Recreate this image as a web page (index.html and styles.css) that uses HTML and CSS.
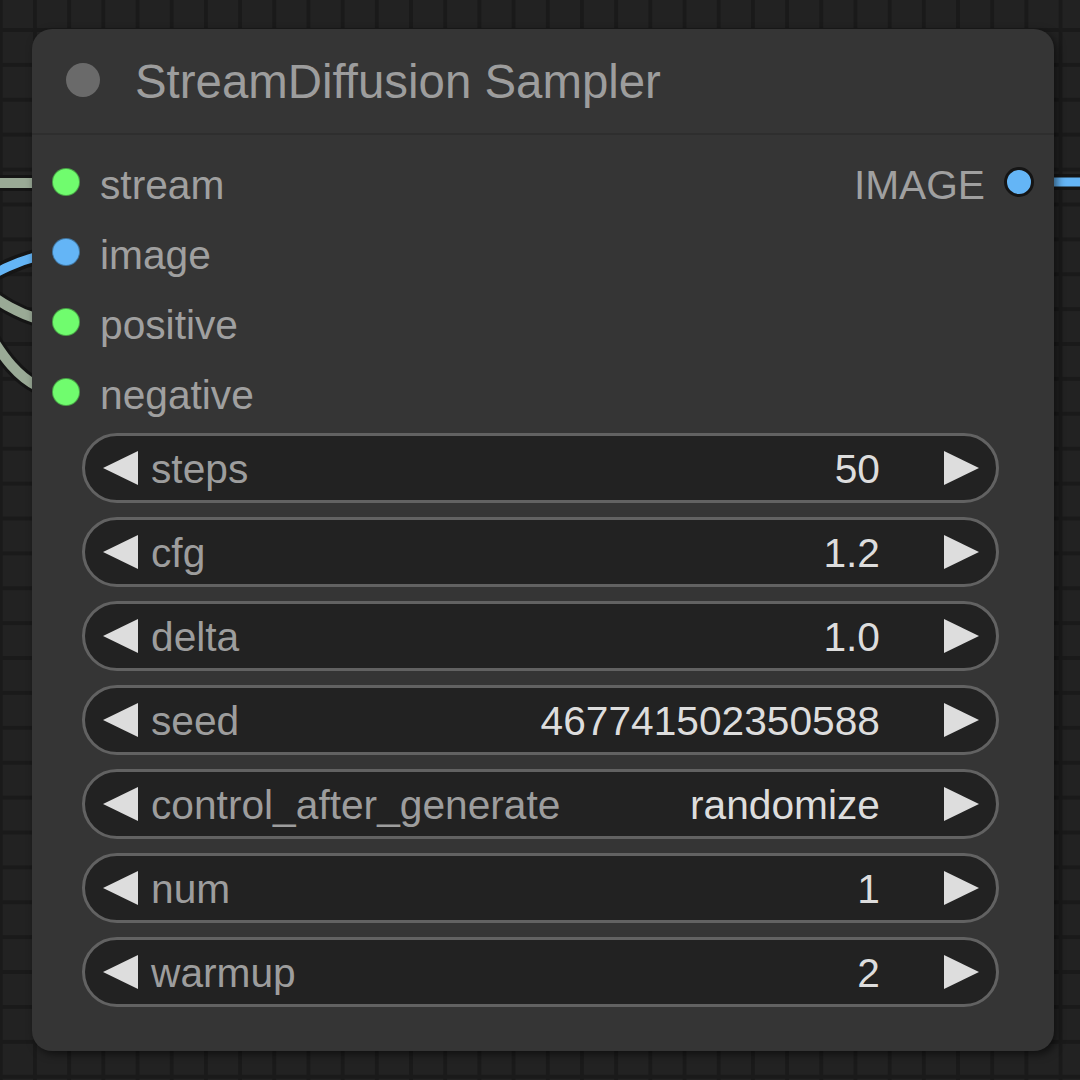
FILE: index.html
```html
<!DOCTYPE html>
<html>
<head>
<meta charset="utf-8">
<link rel="stylesheet" href="styles.css">
</head>
<body>
<div class="canvas">
  <svg class="links" width="1080" height="1080" viewBox="0 0 1080 1080">
    <g fill="none" stroke-linecap="butt">
      <path class="link-outline" d="M -20 183 L 66 183"/>
      <path class="link-cond" d="M -20 183 L 66 183"/>
      <path class="link-outline" d="M -60 250 C -20 300, 0 393, 66 393"/>
      <path class="link-cond" d="M -60 250 C -20 300, 0 393, 66 393"/>
      <path class="link-outline" d="M -100 230 C -40 260, 0 323, 66 323"/>
      <path class="link-cond" d="M -100 230 C -40 260, 0 323, 66 323"/>
      <path class="link-outline" d="M -100 330 C -40 300, 5 253, 66 253"/>
      <path class="link-image" d="M -100 330 C -40 300, 5 253, 66 253"/>
      <path class="link-outline" d="M 1019 182 L 1100 182"/>
      <path class="link-image" d="M 1019 182 L 1100 182"/>
    </g>
  </svg>

  <div class="node">
    <div class="node-title">
      <span class="title-dot"></span>
      <span class="title-text">StreamDiffusion Sampler</span>
    </div>
    <div class="node-body">
      <div class="slots">
        <div class="slot-row">
          <div class="slot-in"><span class="dot green"></span><span class="slot-label">stream</span></div>
          <div class="slot-out"><span class="slot-label">IMAGE</span><span class="dot blue out"></span></div>
        </div>
        <div class="slot-row">
          <div class="slot-in"><span class="dot blue"></span><span class="slot-label">image</span></div>
        </div>
        <div class="slot-row">
          <div class="slot-in"><span class="dot green"></span><span class="slot-label">positive</span></div>
        </div>
        <div class="slot-row">
          <div class="slot-in"><span class="dot green"></span><span class="slot-label">negative</span></div>
        </div>
      </div>
      <div class="widgets">
        <div class="widget"><span class="arrow left"></span><span class="w-label">steps</span><span class="w-value">50</span><span class="arrow right"></span></div>
        <div class="widget"><span class="arrow left"></span><span class="w-label">cfg</span><span class="w-value">1.2</span><span class="arrow right"></span></div>
        <div class="widget"><span class="arrow left"></span><span class="w-label">delta</span><span class="w-value">1.0</span><span class="arrow right"></span></div>
        <div class="widget"><span class="arrow left"></span><span class="w-label">seed</span><span class="w-value">467741502350588</span><span class="arrow right"></span></div>
        <div class="widget"><span class="arrow left"></span><span class="w-label">control_after_generate</span><span class="w-value">randomize</span><span class="arrow right"></span></div>
        <div class="widget"><span class="arrow left"></span><span class="w-label">num</span><span class="w-value">1</span><span class="arrow right"></span></div>
        <div class="widget"><span class="arrow left"></span><span class="w-label">warmup</span><span class="w-value">2</span><span class="arrow right"></span></div>
      </div>
    </div>
  </div>
</div>
</body>
</html>
```

FILE: styles.css
```css
* { box-sizing: border-box; }
html, body {
  margin: 0;
  padding: 0;
  width: 1080px;
  height: 1080px;
  overflow: hidden;
  background: #222222;
  font-family: "Liberation Sans", Arial, sans-serif;
}
.canvas {
  position: relative;
  width: 1080px;
  height: 1080px;
  background-color: #222222;
  background-image:
    linear-gradient(to right, #1a1a1a 0, #1a1a1a 4px, transparent 4px),
    linear-gradient(to bottom, #1a1a1a 0, #1a1a1a 4px, transparent 4px);
  background-size: 34.2px 34.9px, 34.2px 34.9px;
  background-position: 33px 0, 0 28px;
}
.links {
  position: absolute;
  left: 0;
  top: 0;
}
.link-outline { stroke: #151515; stroke-width: 16; }
.link-cond { stroke: #9aaa96; stroke-width: 10; }
.link-image { stroke: #64b5f6; stroke-width: 9; }

.node {
  position: absolute;
  left: 32px;
  top: 29px;
  width: 1022px;
  height: 1022px;
  background: #353535;
  border-radius: 20px;
  box-shadow: 3px 3px 8px rgba(0, 0, 0, 0.55);
  display: flex;
  flex-direction: column;
}
.node-title {
  height: 106px;
  border-bottom: 2px solid #2e2e2e;
  display: flex;
  align-items: center;
  padding-left: 34px;
  padding-bottom: 2px;
}
.title-dot {
  width: 34px;
  height: 34px;
  border-radius: 50%;
  background: #6a6a6a;
  flex: none;
}
.title-text {
  margin-left: 35px;
  font-size: 47.4px;
  color: #9d9d9d;
  white-space: nowrap;
  padding-top: 3px;
}
.node-body {
  padding-top: 12px;
  display: flex;
  flex-direction: column;
}
.slots {
  display: flex;
  flex-direction: column;
}
.slot-row {
  height: 70px;
  display: flex;
  align-items: center;
  justify-content: space-between;
  padding-left: 20px;
  padding-right: 20px;
}
.slot-in, .slot-out {
  display: flex;
  align-items: center;
}
.dot {
  width: 28px;
  height: 28px;
  border-radius: 50%;
  flex: none;
  border: 1px solid rgba(0, 0, 0, 0.35);
}
.dot.green { background: #70fc6e; }
.dot.blue { background: #64b5f6; }
.dot.out {
  width: 30px;
  height: 30px;
  border: 3.5px solid #151515;
}
.slot-label {
  font-size: 40.7px;
  color: #a0a0a0;
  padding-top: 6px;
  white-space: nowrap;
}
.slot-in .slot-label { margin-left: 20px; }
.slot-out .slot-label { margin-right: 19px; }

.widgets {
  margin-top: 6px;
  display: flex;
  flex-direction: column;
  gap: 14px;
  padding-left: 50px;
  padding-right: 55px;
}
.widget {
  height: 70px;
  flex: none;
  border: 3px solid #626262;
  border-radius: 35px;
  background: #222222;
  display: flex;
  align-items: center;
  padding-left: 18px;
  padding-right: 17px;
  font-size: 40.7px;
}
.arrow {
  width: 0;
  height: 0;
  border-top: 17.5px solid transparent;
  border-bottom: 17.5px solid transparent;
  flex: none;
}
.arrow.left { border-right: 35px solid #dddddd; }
.arrow.right { border-left: 35px solid #dddddd; margin-left: 64px; }
.w-label {
  margin-left: 13px;
  color: #9d9d9d;
  white-space: nowrap;
  flex: 1;
  padding-top: 2px;
}
.w-value {
  color: #dddddd;
  white-space: nowrap;
  padding-top: 2px;
}
```
